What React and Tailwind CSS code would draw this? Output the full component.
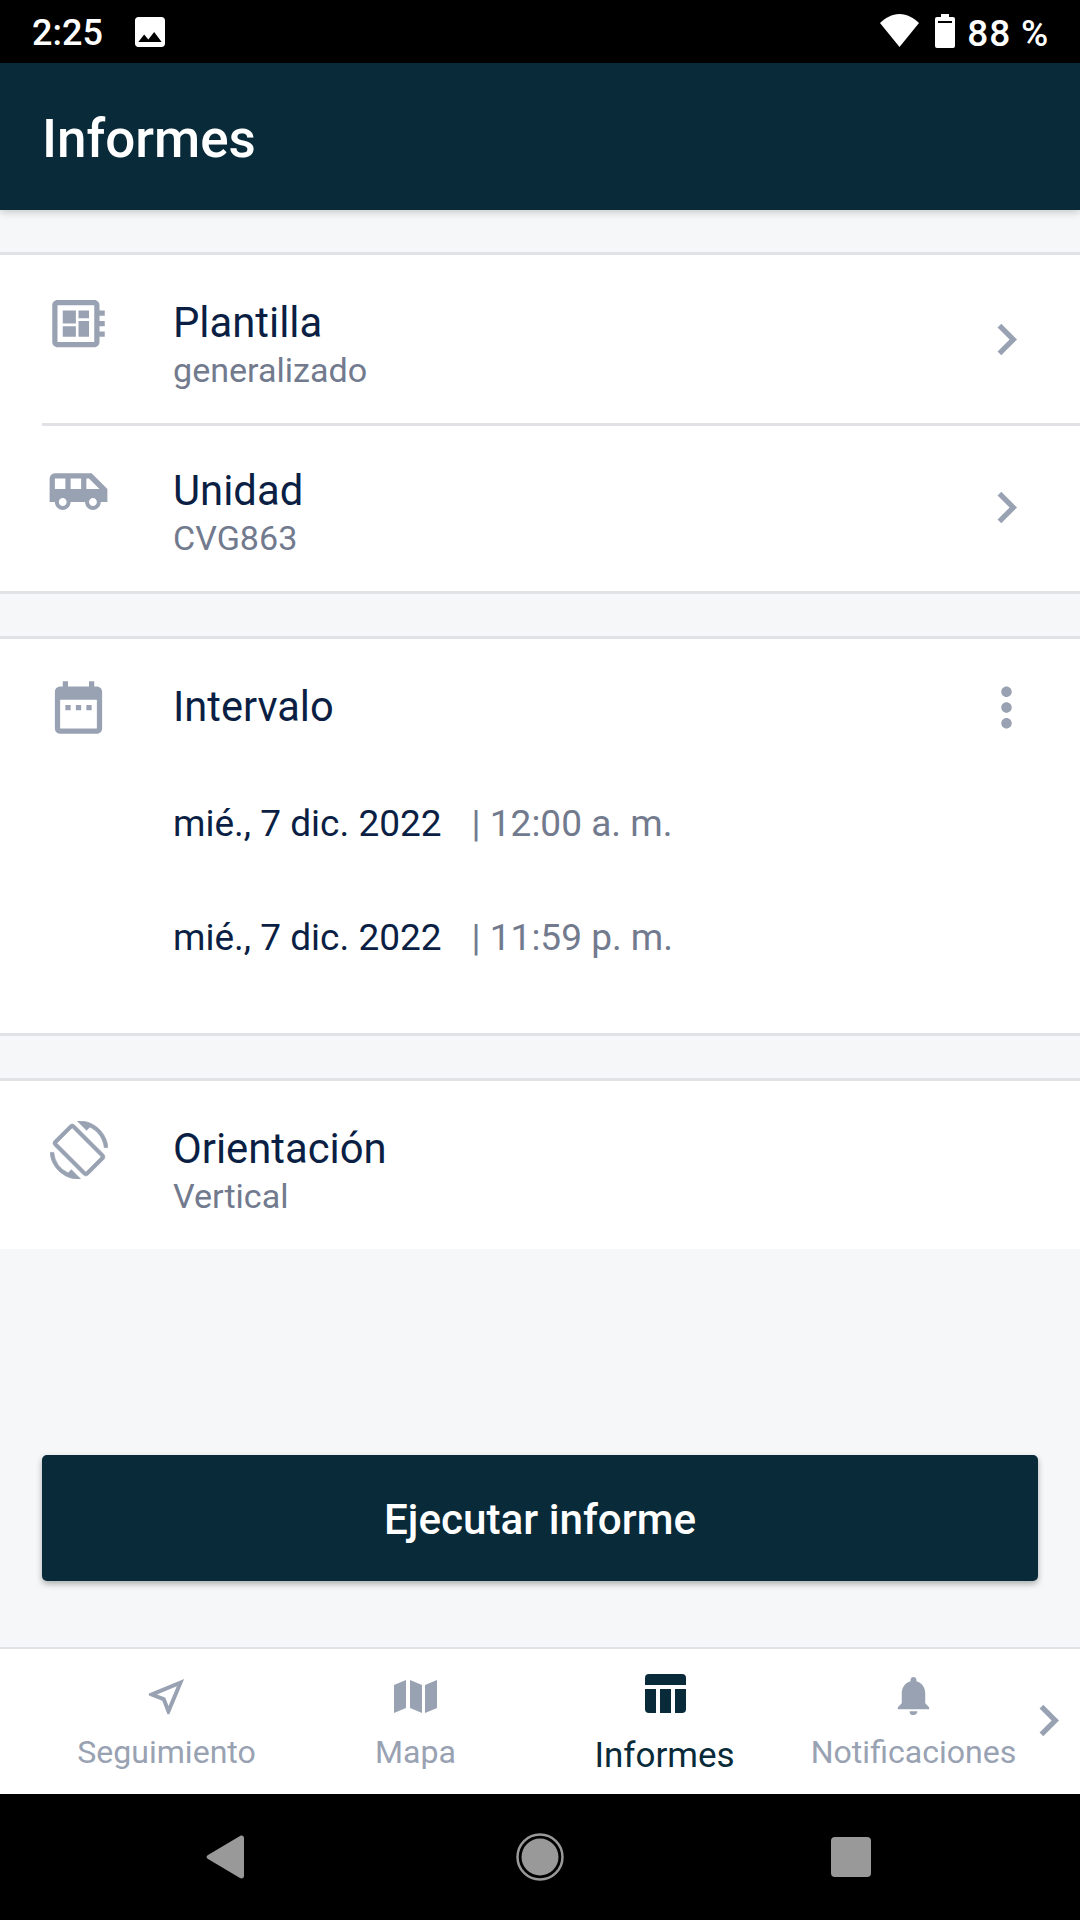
import {
  MdAirportShuttle,
  MdChevronRight,
  MdDateRange,
  MdDeveloperBoard,
  MdImage,
  MdMoreVert,
  MdNotifications,
  MdOutlineNearMe,
  MdScreenRotation,
} from 'react-icons/md';

const intervals = [
  { date: 'mié., 7 dic. 2022', time: '12:00 a. m.' },
  { date: 'mié., 7 dic. 2022', time: '11:59 p. m.' },
];

function MapIcon() {
  return (
    <svg width="43" height="33" viewBox="0 0 43 33" fill="currentColor">
      <path d="M0 5 12 0v28L0 33z" />
      <path d="m16 0 12 5v28l-12-5z" />
      <path d="M31 5 43 0v28l-12 5z" />
    </svg>
  );
}

function ReportIcon() {
  return (
    <svg width="41" height="39" viewBox="0 0 41 39" fill="currentColor" className="ml-px">
      <path d="M4 0h33a4 4 0 0 1 4 4v7H0V4a4 4 0 0 1 4-4z" />
      <path d="M0 15h11v24H4a4 4 0 0 1-4-4z" />
      <path d="M15 15h11v24H15z" />
      <path d="M30 15h11v20a4 4 0 0 1-4 4h-7z" />
    </svg>
  );
}

const tabs = [
  { label: 'Seguimiento', icon: <MdOutlineNearMe size={47} /> },
  { label: 'Mapa', icon: <MapIcon /> },
  { label: 'Informes', icon: <ReportIcon />, active: true },
  { label: 'Notificaciones', icon: <MdNotifications size={47} className="-mt-0.5" /> },
];

function StatusBar() {
  return (
    <div className="h-[63px] bg-black text-white flex items-center justify-between pl-8 pr-8 text-[36px] font-medium">
      <div className="flex items-center">
        <span className="leading-[63px] w-[98px] pt-[3px]">2:25</span>
        <MdImage size={40} />
      </div>
      <div className="flex items-center">
        <svg width="39" height="33" viewBox="0 0 39 33" fill="currentColor" className="mr-4 -mt-0.5">
          <path d="M0 9C5 4 12 0 19.500 0S34 4 39 9L19.500 33z" />
        </svg>
        <svg width="20" height="34" viewBox="0 0 20 34" fill="currentColor" className="mr-3 -mt-px">
          <path fillRule="evenodd" d="M6 0h8v3h4a2 2 0 0 1 2 2v27a2 2 0 0 1-2 2H2a2 2 0 0 1-2-2V5a2 2 0 0 1 2-2h4zM3 7v2h14V7z" />
        </svg>
        <span className="leading-[63px] pt-[3px] text-[37px] tracking-[0.8px] -mr-px">88 %</span>
      </div>
    </div>
  );
}

function Row({ icon, title, subtitle, chevron }) {
  return (
    <div className="h-[168px] flex items-start pl-[47px] pr-[42px]">
      <div className="w-[126px] pt-[37px] text-[#99a2b2]">{icon}</div>
      <div className="flex-1 pt-[43px]">
        <div className="text-[41.8px] leading-[49px] text-[#0b1f44]">{title}</div>
        <div className="text-[34.1px] leading-[46px] text-[#727a8e]">{subtitle}</div>
      </div>
      {chevron && <MdChevronRight size={63} className="self-center text-[#99a2b2]" />}
    </div>
  );
}

export default function App() {
  return (
    <div className="w-[1080px] h-[1920px] flex flex-col bg-[#f5f7f9] font-['Roboto',sans-serif] overflow-hidden">
      <StatusBar />

      {/* Header */}
      <header className="h-[147px] bg-[#082a39] flex items-center pl-[42px] pt-[6px] shadow-[0_2px_8px_rgba(0,0,0,0.2)]">
        <h1 className="text-[53px] font-medium text-white">Informes</h1>
      </header>

      {/* Template and unit */}
      <section className="mt-[42px] bg-white border-y-[3px] border-[#e1e2e5]">
        <Row icon={<MdDeveloperBoard size={63} />} title="Plantilla" subtitle="generalizado" chevron />
        <div className="ml-[42px] h-[3px] -mb-[3px] bg-[#e1e2e5]" />
        <Row icon={<MdAirportShuttle size={63} />} title="Unidad" subtitle="CVG863" chevron />
      </section>

      {/* Interval */}
      <section className="mt-[42px] h-[400px] bg-white border-y-[3px] border-[#e1e2e5]">
        <div className="h-[136px] flex items-center pl-[47px] pr-[42px]">
          <MdDateRange size={63} className="text-[#99a2b2]" />
          <span className="ml-[63px] flex-1 text-[41.6px] text-[#0b1f44]">Intervalo</span>
          <MdMoreVert size={63} className="text-[#99a2b2]" />
        </div>
        {intervals.map((item) => (
          <div key={item.time} className="h-[114px] pl-[173px] pt-[27px] flex text-[37px] leading-[44px]">
            <span className="text-[#0b1f44]">{item.date}</span>
            <span className="ml-[30px] text-[#727a8e]">| {item.time}</span>
          </div>
        ))}
      </section>

      {/* Orientation */}
      <section className="mt-[42px] bg-white border-t-[3px] border-[#e1e2e5]">
        <Row
          icon={
            <MdScreenRotation
              size={58}
              strokeWidth={0.3}
              className="mt-[3px] ml-[3px] [&>path[fill=none]]:stroke-none"
            />
          }
          title="Orientación"
          subtitle="Vertical"
        />
      </section>

      <div className="flex-1 flex flex-col justify-end px-[42px] pb-[66px]">
        <button className="h-[126px] pt-[3px] rounded-[5px] bg-[#082a39] text-white text-[42.2px] font-medium shadow-[0_3px_6px_rgba(0,0,0,0.3)]">
          Ejecutar informe
        </button>
      </div>

      {/* Tabs */}
      <nav className="relative h-[147px] bg-white border-t-2 border-[#e1e2e5] px-[42px] grid grid-cols-4">
        {tabs.map((tab) => (
          <div
            key={tab.label}
            className={`flex flex-col items-center ${tab.active ? 'text-[#082a39]' : 'text-[#99a2b2]'}`}
          >
            <div className={`h-[47px] flex items-center ${tab.active ? 'mt-[21px]' : 'mt-[24px]'}`}>{tab.icon}</div>
            <span className={tab.active ? 'mt-[18px] text-[35px] leading-[42px]' : 'mt-[13px] text-[32.1px] leading-[38px]'}>
              {tab.label}
            </span>
          </div>
        ))}
        <MdChevronRight size={63} className="absolute right-0 top-[40px] text-[#99a2b2]" />
      </nav>

      {/* System navigation */}
      <div className="h-[126px] bg-black text-[#999] flex items-center">
        <svg width="38" height="44" viewBox="0 0 38 44" fill="currentColor" className="ml-[206px]">
          <path d="M2 20 34 1c2-1 4 0 4 2v38c0 2-2 3-4 2L2 24c-2-1-2-3 0-4z" />
        </svg>
        <svg width="48" height="48" viewBox="0 0 48 48" fill="none" className="ml-[272px]">
          <circle cx="24" cy="24" r="22.500" stroke="currentColor" strokeWidth="2.500" />
          <circle cx="24" cy="24" r="18.500" fill="currentColor" />
        </svg>
        <div className="ml-[267px] w-10 h-10 rounded-[4px] bg-[#999]" />
      </div>
    </div>
  );
}
